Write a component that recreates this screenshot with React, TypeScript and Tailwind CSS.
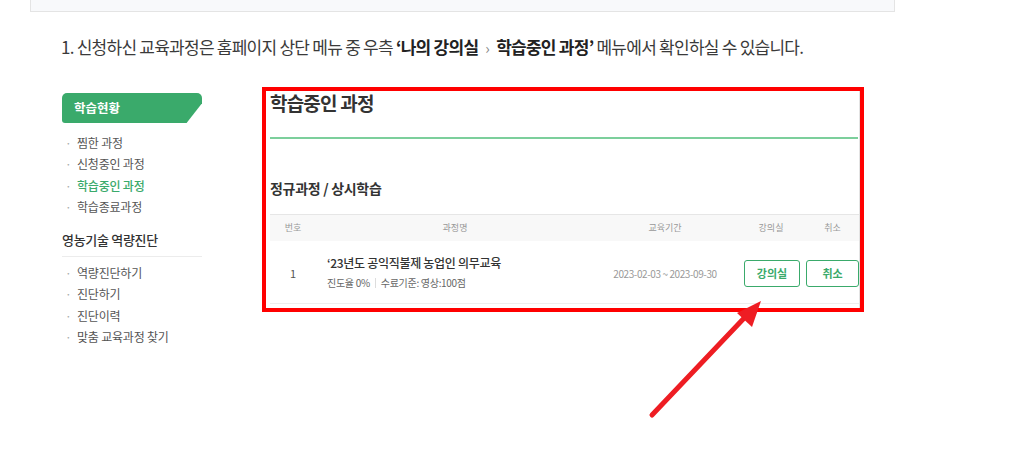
import React from "react";

const font = { fontFamily: '"Noto Sans CJK KR", "Noto Sans", sans-serif' };

const menu1 = [
  { label: "찜한 과정", active: false },
  { label: "신청중인 과정", active: false },
  { label: "학습중인 과정", active: true },
  { label: "학습종료과정", active: false },
];

const menu2 = ["역량진단하기", "진단하기", "진단이력", "맞춤 교육과정 찾기"];

const MenuItem: React.FC<{ label: string; active?: boolean }> = ({ label, active }) => (
  <li className="flex items-center h-[21.5px] text-[12px] tracking-[-0.2px]">
    <span className="w-[15px] pl-[3px] text-[#aaa]">·</span>
    <span className={active ? "text-[#3aaa6b] font-medium" : "text-[#555]"}>{label}</span>
  </li>
);

const Sidebar: React.FC = () => (
  <div className="w-[140px] mt-[6px] shrink-0">
    <div className="h-[30px] bg-[#3aaa6b] rounded-t-[5px] rounded-bl-[3px] flex items-center pl-[12px] text-white text-[12.5px] font-bold [clip-path:polygon(0_0,100%_0,100%_34%,89%_100%,0_100%)]">
      학습현황
    </div>
    <ul className="mt-[9px]">
      {menu1.map((m) => (
        <MenuItem key={m.label} label={m.label} active={m.active} />
      ))}
    </ul>
    <div className="mt-[11px] text-[13px] font-medium text-[#333] tracking-[-0.3px] h-[22px] flex items-center">
      영농기술 역량진단
    </div>
    <div className="mt-[5px] h-px bg-[#ececec]" />
    <ul className="mt-[5px]">
      {menu2.map((m) => (
        <MenuItem key={m} label={m} />
      ))}
    </ul>
  </div>
);

const CourseTable: React.FC = () => (
  <div className="w-[589px]">
    <div className="grid grid-cols-[46px_278px_142px_70px_53px] h-[27px] items-center bg-[#f8f8f8] border-t border-[#e6e6e6] text-[9px] text-[#999] text-center">
      <div>번호</div>
      <div>과정명</div>
      <div>교육기간</div>
      <div>강의실</div>
      <div>취소</div>
    </div>
    <div className="grid grid-cols-[46px_278px_142px_70px_53px] h-[63px] items-center border-b border-[#eee]">
      <div className="text-center text-[11px] text-[#555] pt-[3px]">1</div>
      <div className="pl-[11px]">
        <div className="text-[12px] font-medium text-[#333] tracking-[-0.3px]">‘23년도 공익직불제 농업인 의무교육</div>
        <div className="mt-[3px] flex items-center text-[10px] text-[#666] tracking-[-0.3px]">
          <span>진도율 0%</span>
          <span className="mx-[5px] h-[10px] w-px bg-[#ddd]" />
          <span>수료기준: 영상:100점</span>
        </div>
      </div>
      <div className="text-center text-[10px] text-[#999] tracking-[-0.4px] pt-[2px]">2023-02-03 ~ 2023-09-30</div>
      <div className="flex justify-end pr-[6px] pt-[3px]">
        <button className="w-[56px] h-[27px] border-[1.5px] border-[#3aaa6b] rounded-[3px] text-[11px] font-bold text-[#3aaa6b]">
          강의실
        </button>
      </div>
      <div className="flex pt-[3px]">
        <button className="w-[53px] h-[27px] border-[1.5px] border-[#3aaa6b] rounded-[3px] text-[11px] font-bold text-[#3aaa6b]">
          취소
        </button>
      </div>
    </div>
  </div>
);

const Arrow: React.FC = () => (
  <svg className="absolute left-0 top-0 pointer-events-none" width="1014" height="466">
    <line x1="652" y1="415" x2="748" y2="314" stroke="#ee1d23" strokeWidth="5" strokeLinecap="round" />
    <polygon points="761,301 737,313 752,327" fill="#ee1d23" />
  </svg>
);

export default function App() {
  return (
    <div className="relative w-[1014px] h-[466px] bg-white overflow-hidden" style={font}>
      <div className="ml-[30px] w-[865px] h-[12px] bg-[#f8f9fb] border-x border-b border-[#e4e4e4]" />
      <p className="mt-[23px] pl-[61px] h-[24px] leading-[24px] text-[17px] text-[#3a3a3a] tracking-[-0.75px] whitespace-nowrap">
        1. 신청하신 교육과정은 홈페이지 상단 메뉴 중 우측{" "}
        <b className="font-bold text-[#222]">‘나의 강의실</b>{" "}
        <span className="text-[#888] text-[15px] mx-[4px]">›</span>{" "}
        <b className="font-bold text-[#222]">학습중인 과정’</b> 메뉴에서 확인하실 수 있습니다.
      </p>
      <div className="mt-[28px] pl-[62px] flex items-start gap-[60px]">
        <Sidebar />
        <div className="w-[602px] border-4 border-[#ff0000] bg-white">
          <div className="pl-[4px] pr-[1px] pb-[4px] border-r border-[#e3e3e3]">
            <h2 className="h-[24px] leading-[24px] text-[19px] font-bold text-[#333] tracking-[-0.8px]">학습중인 과정</h2>
            <div className="mt-[22px] h-[2px] bg-[#7ccf9c]" />
            <h3 className="mt-[39px] h-[20px] leading-[20px] text-[14px] font-bold text-[#333] tracking-[-0.3px]">
              정규과정 / 상시학습
            </h3>
            <div className="mt-[16px]">
              <CourseTable />
            </div>
          </div>
        </div>
      </div>
      <Arrow />
    </div>
  );
}
